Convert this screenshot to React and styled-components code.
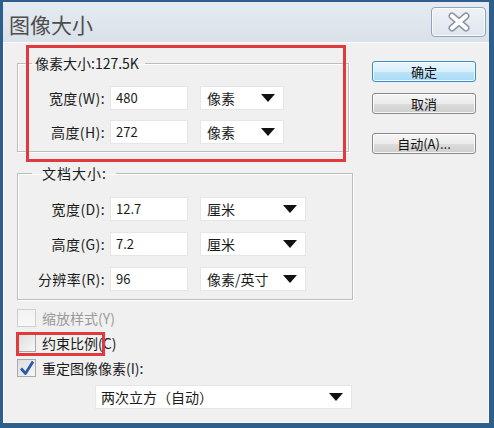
import React from 'react';
import styled, { createGlobalStyle } from 'styled-components';

const Global = createGlobalStyle`
  html, body { margin: 0; padding: 0; background: #2e5e8b; }
  body { font-family: "Noto Sans CJK SC", "Noto Sans", sans-serif; color: #1b1b1b; }
  * { box-sizing: border-box; }
`;

const Window = styled.div`
  position: relative;
  width: 494px;
  height: 428px;
  border-style: solid;
  border-color: #2e5e8b;
  border-width: 2px 5px 5px 3px;
  display: flex;
  flex-direction: column;
  background: #f0f0f0;
`;

const TitleBar = styled.div`
  flex: none;
  height: 40px;
  display: flex;
  justify-content: space-between;
  align-items: flex-start;
  padding-left: 6px;
  background: linear-gradient(#e5ebf1, #d9e1e9);
`;

const Title = styled.h1`
  margin: 0;
  padding-top: 3px;
  font-weight: normal;
  font-size: 21px;
  line-height: 38px;
  color: #4d4d4d;
`;

const CloseButton = styled.button`
  width: 55px;
  height: 30px;
  margin: 5px 3px 0 0;
  padding: 0;
  border: 1px solid #93a3b5;
  border-radius: 4px;
  background: linear-gradient(#eef2f6, #dfe6ee);
  box-shadow: inset 0 0 0 1px rgba(255,255,255,0.7);
  display: flex;
  align-items: center;
  justify-content: center;
`;

const Body = styled.div`
  flex: 1;
  display: flex;
  align-items: flex-start;
  gap: 19px;
  padding-left: 13px;
  border: 1px solid #fafafa;
  background: #f0f0f0;
`;

const LeftCol = styled.div`
  width: 336px;
  display: flex;
  flex-direction: column;
  padding-top: 11px;
`;

const RightCol = styled.div`
  width: 104px;
  display: flex;
  flex-direction: column;
  padding-top: 18px;
`;

const Group = styled.fieldset`
  width: ${p => p.$w}px;
  margin: ${p => p.$mt || 0}px 0 0 0;
  padding: ${p => p.$pt}px 0 ${p => p.$pb}px 0;
  border: 1px solid #bdbdbd;
  box-shadow: 1px 1px 0 #ffffff, inset 1px 1px 0 #ffffff;
  min-width: 0;
`;

const Legend = styled.legend`
  margin-left: 14px;
  padding: ${p => p.$pad};
  font-size: 14px;
  line-height: 18px;
  letter-spacing: ${p => p.$ls || 0}px;
`;

const Rows = styled.div`
  display: flex;
  flex-direction: column;
  gap: ${p => p.$gap}px;
`;

const Row = styled.div`
  display: flex;
  align-items: center;
  height: 24px;
`;

const Label = styled.label`
  width: 87px;
  text-align: right;
  font-size: 14px;
  letter-spacing: 0.4px;
  white-space: nowrap;
`;

const Field = styled.div`
  width: 78px;
  height: 24px;
  margin-left: 5px;
  padding-left: 5px;
  background: #ffffff;
  border: 1px solid #e6e6e6;
  font-size: 13px;
  line-height: 22px;
`;

const Select = styled.div`
  width: ${p => p.$w}px;
  height: 24px;
  margin-left: ${p => p.$ml}px;
  padding: 0 8px 0 6px;
  background: #ffffff;
  border: 1px solid #e6e6e6;
  font-size: 14px;
  display: flex;
  align-items: center;
  justify-content: space-between;
  white-space: nowrap;
`;

const Arrow = styled.span`
  width: 0;
  height: 0;
  border-left: 7px solid transparent;
  border-right: 7px solid transparent;
  border-top: 8px solid #111;
`;

const Checks = styled.div`
  display: flex;
  flex-direction: column;
  margin-top: 5px;
`;

const CheckRow = styled.div`
  display: flex;
  align-items: center;
  height: 25px;
  gap: 6px;
  font-size: 14px;
  color: ${p => (p.$disabled ? '#9a9a9a' : '#1b1b1b')};
`;

const Box = styled.span`
  width: 19px;
  height: 18px;
  border: 1px solid ${p => (p.$disabled ? '#cfcfcf' : '#a9a9a9')};
  background: ${p => (p.$disabled ? 'linear-gradient(#f3f3f3, #f8f8f8)' : 'linear-gradient(135deg, #dedede, #f6f6f6)')};
  display: flex;
  align-items: center;
  justify-content: center;
`;

const Resample = styled(Select)`
  margin-top: 5px;
  margin-left: 78px;
  padding-left: 5px;
`;

const Button = styled.button`
  width: 104px;
  height: 21px;
  margin-top: ${p => p.$mt}px;
  padding: 0;
  border-radius: 3px;
  font-family: inherit;
  font-size: 13px;
  color: #111;
  border: 1px solid ${p => (p.$primary ? '#3c8dc4' : '#8a8a8a')};
  background: ${p => (p.$primary ? 'linear-gradient(#e9f6fd 0%, #d7eefb 50%, #bde4f8 51%, #a7d9f5 100%)' : 'linear-gradient(#f6f6f6 0%, #ebebeb 50%, #dddddd 51%, #cfcfcf 100%)')};
  box-shadow: inset 0 0 0 1px rgba(255,255,255,0.8);
`;

const Mark = styled.div`
  position: absolute;
  left: ${p => p.$x}px;
  top: ${p => p.$y}px;
  width: ${p => p.$w}px;
  height: ${p => p.$h}px;
  border: 3px solid #e0393e;
  pointer-events: none;
`;

const CloseIcon = () => (
  <svg width="24" height="20" viewBox="0 0 24 20">
    <path d="M5 4 L19 16 M19 4 L5 16" stroke="#8a949f" strokeWidth="7" strokeLinecap="round" />
    <path d="M5 4 L19 16 M19 4 L5 16" stroke="#ffffff" strokeWidth="4.2" strokeLinecap="round" />
  </svg>
);

const Tick = () => (
  <svg width="16" height="16" viewBox="0 0 16 16">
    <path d="M2 8.5 L6.5 13.5 L14 1.5" fill="none" stroke="#2a5aa8" strokeWidth="2.8" strokeLinejoin="round" />
  </svg>
);

const DimRow = ({ label, value, unit, sw }) => (
  <Row>
    <Label>{label}</Label>
    <Field>{value}</Field>
    <Select $w={sw} $ml={12}>
      <span>{unit}</span>
      <Arrow />
    </Select>
  </Row>
);

export default function App() {
  return (
    <>
      <Global />
      <Window>
        <TitleBar>
          <Title>图像大小</Title>
          <CloseButton aria-label="关闭"><CloseIcon /></CloseButton>
        </TitleBar>
        <Body>
          <LeftCol>
            <Group $w={332} $pt={14} $pb={7}>
              <Legend $pad="0 6px 0 3px">像素大小:127.5K</Legend>
              <Rows $gap={10}>
                <DimRow label="宽度(W):" value="480" unit="像素" sw={84} />
                <DimRow label="高度(H):" value="272" unit="像素" sw={84} />
              </Rows>
            </Group>
            <Group $w={336} $mt={12} $pt={15} $pb={8}>
              <Legend $pad="0 9px 0 10px" $ls={1}>文档大小:</Legend>
              <Rows $gap={11}>
                <DimRow label="宽度(D):" value="12.7" unit="厘米" sw={106} />
                <DimRow label="高度(G):" value="7.2" unit="厘米" sw={106} />
                <DimRow label="分辨率(R):" value="96" unit="像素/英寸" sw={106} />
              </Rows>
            </Group>
            <Checks>
              <CheckRow $disabled><Box $disabled />缩放样式(Y)</CheckRow>
              <CheckRow><Box />约束比例(C)</CheckRow>
              <CheckRow><Box><Tick /></Box>重定图像像素(I):</CheckRow>
            </Checks>
            <Resample $w={257}>
              <span>两次立方（自动）</span>
              <Arrow />
            </Resample>
          </LeftCol>
          <RightCol>
            <Button $primary $mt={0}>确定</Button>
            <Button $mt={11}>取消</Button>
            <Button $mt={19}>自动(A)...</Button>
          </RightCol>
        </Body>
        <Mark $x={23} $y={43} $w={320} $h={117} />
        <Mark $x={13} $y={330} $w={89} $h={24} />
      </Window>
    </>
  );
}
